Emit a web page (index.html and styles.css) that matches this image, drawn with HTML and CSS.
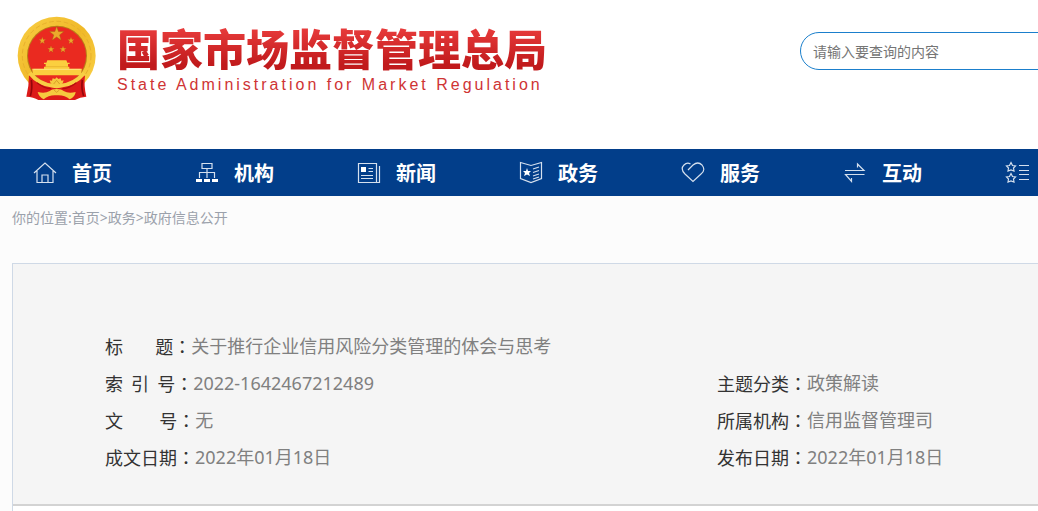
FILE: index.html
```
<!DOCTYPE html>
<html lang="zh-CN">
<head>
    <meta charset="UTF-8">
    <meta name="viewport" content="width=device-width, initial-scale=1.0">
    <title>国家市场监督管理总局</title>
    <link rel="stylesheet" href="styles.css">
</head>
<body>
    <div class="page">
        <header class="header">
            <a class="logo" href="#">
                <svg class="emblem" viewBox="0 0 240 255" aria-hidden="true">
                    <defs>
                        <linearGradient id="gold" x1="0" y1="0" x2="1" y2="1">
                            <stop offset="0" stop-color="#f9cf45"/>
                            <stop offset="0.5" stop-color="#f0b928"/>
                            <stop offset="1" stop-color="#fbd34a"/>
                        </linearGradient>
                        <path id="star" d="M0 -10 L2.4 -3.2 L9.5 -3.1 L3.8 1.2 L5.9 8.1 L0 4 L-5.9 8.1 L-3.8 1.2 L-9.5 -3.1 L-2.4 -3.2 Z"/>
                    </defs>
                    <circle cx="119" cy="119" r="117" fill="url(#gold)"/>
                    <circle cx="119" cy="119" r="103" fill="none" stroke="#e8b02c" stroke-width="3" stroke-dasharray="14 8"/>
                    <circle cx="120" cy="119" r="90" fill="#b97d18"/>
                    <circle cx="120" cy="119" r="87" fill="#ea2a20"/>
                    <g fill="#eba92c" stroke="#a85a12" stroke-width="0.6">
                        <use href="#star" transform="translate(119 54) scale(2.3)"/>
                        <use href="#star" transform="translate(76 74) scale(1.1)"/>
                        <use href="#star" transform="translate(162 74) scale(1.1)"/>
                        <use href="#star" transform="translate(102 100) scale(1.1)"/>
                        <use href="#star" transform="translate(138 100) scale(1.1)"/>
                    </g>
                    <g fill="#fbcf3f">
                        <path d="M91 133 H148 L151 140 H158 V144 H153 V152 H157 V158 H195 L191 178 H49 L45 158 H81 V152 H86 V144 H81 V140 H88 Z"/>
                        <path d="M49 160 H191" stroke="#fff0a0" stroke-width="2"/>
                        <path d="M86 152 H153" stroke="#c98518" stroke-width="1"/>
                    </g>
                    <path d="M36 178 L60 186 Q80 203 101 207 L119 215 L138 207 Q160 203 178 186 L204 178 Q200 210 208 242 Q188 243 174 252 H64 Q50 243 28 242 Q36 210 36 178 Z" fill="#dc1a19"/>
                    <path d="M43 192 Q47 218 40 240 M196 192 Q192 218 200 240" fill="none" stroke="#93060b" stroke-width="5"/>
                    <path d="M38 171 Q66 206 108 209 L119 211 L130 209 Q172 206 202 171" fill="none" stroke="#f8ce45" stroke-width="12"/>
                    <path d="M60 200 Q82 217 102 218 M178 200 Q156 217 136 218" fill="none" stroke="#b40d10" stroke-width="4"/>
                    <g fill="#f6c93f">
                        <path d="M62 228 Q84 234 98 225 Q104 219 119 219 Q134 219 140 225 Q154 234 176 228 Q174 244 158 250 Q142 236 119 238 Q96 236 80 250 Q66 244 62 228 Z"/>
                        <path d="M101 202 L98 193 L105 194 L107 187 L114 189 L119 184 L124 189 L131 187 L133 194 L140 193 L137 202 Q130 209 119 209 Q108 209 101 202 Z"/>
                    </g>
                    <path d="M110 204 L119 193 L128 204 M111 222 L119 229 L127 222" fill="none" stroke="#c98a1c" stroke-width="2"/>
                </svg>
                <span class="logo-text">
                    <span class="logo-name">国家市场监督管理总局</span>
                    <span class="logo-en" lang="en">State Administration for Market Regulation</span>
                </span>
            </a>
            <form class="search">
                <input type="text" aria-label="搜索" placeholder="请输入要查询的内容">
            </form>
        </header>

        <nav class="nav">
            <a href="#">
                <svg class="icon" viewBox="0 0 24 24"><path d="M1 12 L12 2 L23 12 M4 10 V21.500 H20 V10 M9 21 V14 H15 V21"/></svg>
                首页
            </a>
            <a href="#">
                <svg class="icon" viewBox="0 0 24 24"><path d="M7 2.500 H17 V7.500 H7 Z M12 8 V17 M4.500 17 V11.500 H19.500 V17"/><path class="solid" d="M1 18 H7 V21 H1 Z M9 18 H15 V21 H9 Z M17 18 H23 V21 H17 Z"/></svg>
                机构
            </a>
            <a href="#">
                <svg class="icon" viewBox="0 0 24 24"><path d="M1.500 2.500 H19.500 V21.500 H1.500 Z M19.500 21.500 H22.500 V5 M11.500 7.500 H16 M11.500 10.500 H16 M4 14.500 H16 M4 17.500 H16"/><path class="solid" d="M4 6 H9 V11 H4 Z"/></svg>
                新闻
            </a>
            <a href="#">
                <svg class="icon" viewBox="0 0 24 24"><path d="M1.500 1.500 L12 4.500 L22.500 1.500 V17.500 L12 21.500 L1.500 17.500 Z M14 8 L20 6 M14 11.500 L20 9.500 M14 15 L20 13 M14 18 L20 16"/><path class="solid" d="M8 7 L9 10 L12 10 L10 12 L11 15 L8 13.500 L5 15 L6 12 L4 10 L7 10 Z"/></svg>
                政务
            </a>
            <a href="#">
                <svg class="icon" viewBox="0 0 24 24"><path d="M7 9 L12 4 Q17 0 21 4 Q25 9 20 13 L12 20.500 L4 13 Q-1 8 3 4 Q6 1 9.500 3"/></svg>
                服务
            </a>
            <a href="#">
                <svg class="icon" viewBox="0 0 24 24"><path d="M2 9.500 H21 L14.500 3 V6.500 M21.500 13.500 H2.500 L8.500 20.500 V17"/></svg>
                互动
            </a>
            <a href="#" aria-label="专题">
                <svg class="icon" viewBox="0 0 24 24"><path d="M14 4.500 H24 M14 9.500 H24 M14 13.500 H24 M14 18.500 H24 M6 1.500 L7.500 4.500 L10.500 5 L8.500 7 L9 10 L6 9 L3 10 L3.500 7 L1.500 5 L4.500 4.500 Z M6 12.500 L7.500 15.500 L10.500 16 L8.500 18 L9 21 L6 20 L3 21 L3.500 18 L1.500 16 L4.500 15.500 Z"/></svg>
            </a>
        </nav>

        <main class="main">
            <div class="crumbs">你的位置:<a href="#">首页</a>&gt;<a href="#">政务</a>&gt;<a href="#">政府信息公开</a></div>

            <div class="article">
                <dl class="info">
                    <div class="item wide">
                        <dt>标&nbsp;&nbsp;&nbsp;&nbsp;&nbsp;&nbsp;&nbsp;&nbsp;题<span class="colon" lang="zh-TW">：</span></dt>
                        <dd>关于推行企业信用风险分类管理的体会与思考</dd>
                    </div>
                    <div class="item">
                        <dt>索&nbsp;&nbsp;引&nbsp;&nbsp;号<span class="colon" lang="zh-TW">：</span></dt>
                        <dd>2022-1642467212489</dd>
                    </div>
                    <div class="item">
                        <dt>主题分类<span class="colon" lang="zh-TW">：</span></dt>
                        <dd>政策解读</dd>
                    </div>
                    <div class="item">
                        <dt>文&nbsp;&nbsp;&nbsp;&nbsp;&nbsp;&nbsp;&nbsp;&nbsp;&nbsp;号<span class="colon" lang="zh-TW">：</span></dt>
                        <dd>无</dd>
                    </div>
                    <div class="item">
                        <dt>所属机构<span class="colon" lang="zh-TW">：</span></dt>
                        <dd>信用监督管理司</dd>
                    </div>
                    <div class="item">
                        <dt>成文日期<span class="colon" lang="zh-TW">：</span></dt>
                        <dd>2022年01月18日</dd>
                    </div>
                    <div class="item">
                        <dt>发布日期<span class="colon" lang="zh-TW">：</span></dt>
                        <dd>2022年01月18日</dd>
                    </div>
                </dl>
                <div class="content"></div>
            </div>
        </main>
    </div>
</body>
</html>
```
FILE: styles.css
```
* {
    box-sizing: border-box;
}

body {
    margin: 0;
    background-color: #fcfcfc;
    font-family: "Noto Sans", "Noto Sans CJK SC", sans-serif;
    font-size: 14px;
    overflow-x: hidden;
}

a {
    color: inherit;
    text-decoration: none;
}

.page {
    min-width: 1224px;
}

.header {
    display: flex;
    justify-content: space-between;
    align-items: flex-start;
    padding: 16px 24px 48px 17px;
    background-color: #fff;
}

.logo {
    display: flex;
    gap: 20px;
}

.emblem {
    width: 80px;
    height: 85px;
}

.logo-text {
    display: flex;
    flex-direction: column;
    padding-top: 6px;
}

.logo-name {
    font-family: "Noto Sans CJK SC", sans-serif;
    font-size: 43px;
    font-weight: 900;
    line-height: 50px;
    color: transparent;
    background: linear-gradient(#e63a3a 15%, #c11a1c 85%);
    -webkit-background-clip: text;
    background-clip: text;
}

.logo-en {
    font-family: "Liberation Sans", sans-serif;
    font-size: 16px;
    line-height: 26px;
    letter-spacing: 3px;
    color: #cf3434;
}

.search {
    width: 400px;
    padding-top: 16px;
}

.search input {
    width: 100%;
    height: 38px;
    padding: 0 12px;
    border: 1px solid #1b7fcc;
    border-radius: 19px;
    background-color: #fff;
    font-family: inherit;
    font-size: 14px;
}

.search input::placeholder {
    color: #757575;
}

.nav {
    display: flex;
    height: 47px;
    padding-left: 33px;
    background-color: #023e8a;
    overflow: hidden;
}

.nav a {
    display: flex;
    flex: 0 0 162px;
    align-items: center;
    gap: 15px;
    color: #fff;
    font-size: 20px;
    font-weight: bold;
}

.icon {
    width: 24px;
    height: 24px;
    fill: none;
    stroke: #d5e0ee;
    stroke-width: 1.2;
}

.icon .solid {
    fill: #fff;
    stroke: none;
}

.main {
    padding: 0 12px;
}

.crumbs {
    padding: 12px 0 35px;
    line-height: 20px;
    color: #9ba1ab;
}

.article {
    border: 1px solid #cfd9e6;
    border-bottom: none;
}

.info {
    display: grid;
    grid-template-columns: 3fr 2fr;
    margin: 0;
    padding: 64px 86px 28px 92px;
    border-bottom: 2px solid #d3d3d3;
    background-color: #f5f5f5;
    font-size: 18px;
    line-height: 37px;
}

.item {
    display: flex;
}

.wide {
    grid-column: 1 / 3;
}

.item dt {
    font-family: "Noto Sans CJK SC", sans-serif;
    color: #333;
}

.item dd {
    margin: 0;
    color: #808080;
}

.colon {
    font-family: "Noto Sans CJK TC", sans-serif;
}

.content {
    min-height: 5px;
    background-color: #fff;
}
```
